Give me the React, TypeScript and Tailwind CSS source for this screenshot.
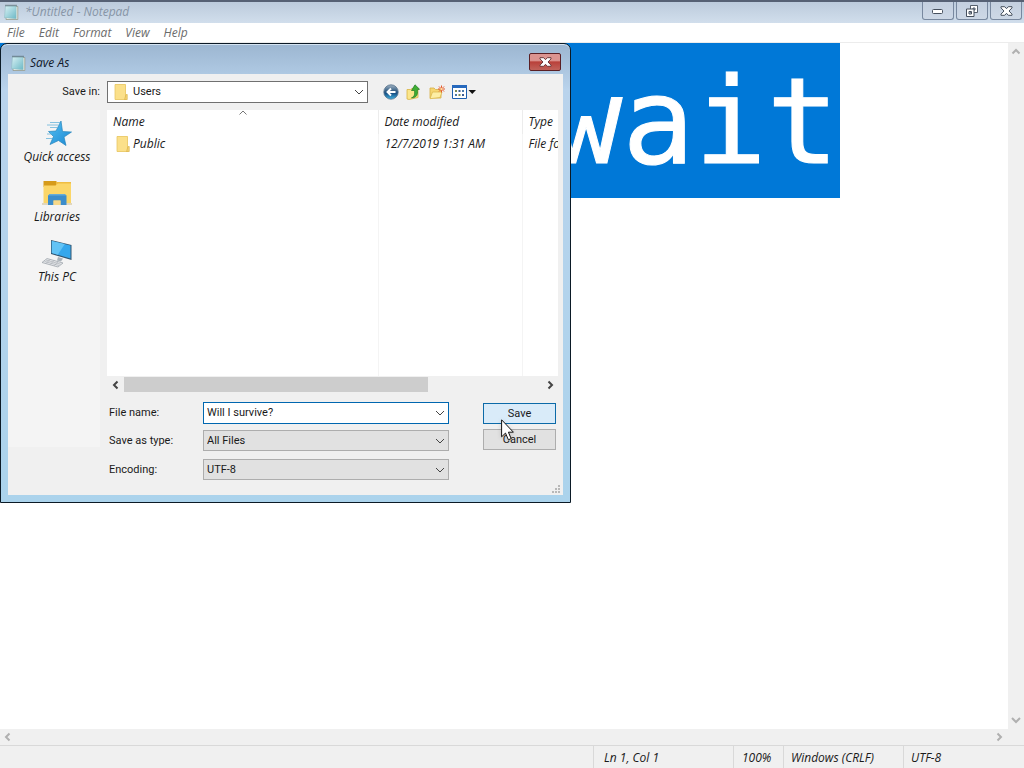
import React from "react";

type ChevronProps = { dir: "up" | "down" | "left" | "right"; className?: string };

const chevronPaths = {
  up: "M1.5 6.5 5 3l3.5 3.5",
  down: "M1 3l4 4 4-4",
  left: "M6.5 1.5 3 5l3.5 3.5",
  right: "M3.5 1.5 7 5 3.5 8.5",
};

function Chevron({ dir, className = "" }: ChevronProps) {
  return (
    <svg viewBox="0 0 10 10" className={`size-[10px] shrink-0 ${className}`} fill="none" stroke="currentColor" aria-hidden="true">
      <path d={chevronPaths[dir]} />
    </svg>
  );
}

function NotepadIcon({ className = "" }: { className?: string }) {
  return (
    <svg viewBox="0 0 16 16" className={`size-4 shrink-0 ${className}`} aria-hidden="true">
      <defs>
        <linearGradient id="pad" x1="0" y1="0" x2="1" y2="1">
          <stop offset="0" stopColor="#d9f1f4" />
          <stop offset="1" stopColor="#6cb9c6" />
        </linearGradient>
      </defs>
      <path d="M4 2.500h10.800V15.500H3z" fill="#f6f5ea" stroke="#8b8f80" strokeWidth=".7" />
      <path d="M2.500 2h10.700v12.700L1.500 13.700z" fill="url(#pad)" stroke="#86b7bf" strokeWidth=".5" />
      <path d="M2.500 1.400H14" stroke="#47585c" strokeWidth="1.500" strokeDasharray="1 1" />
    </svg>
  );
}

function FolderIcon() {
  return (
    <svg viewBox="0 0 14 16" className="h-4 w-[14px] shrink-0" aria-hidden="true">
      <path d="M1 .5h10.500v10l1.500 1v4H1z" fill="#f3cf5f" />
      <path d="M1 .5h10.500v15H1z" fill="#fbe08a" stroke="#e9c765" strokeWidth=".8" />
      <path d="M10.500 15.500 12 10.500h1.300v5z" fill="#f3d272" stroke="#d5aa3c" strokeWidth=".5" />
    </svg>
  );
}

function BackIcon() {
  return (
    <svg viewBox="0 0 16 16" className="size-4" aria-hidden="true">
      <defs>
        <linearGradient id="orb" x1="0" y1="0" x2="0" y2="1">
          <stop offset="0" stopColor="#a3b4c4" />
          <stop offset=".4" stopColor="#3c6488" />
          <stop offset=".6" stopColor="#1a5387" />
          <stop offset="1" stopColor="#3fb4e4" />
        </linearGradient>
      </defs>
      <circle cx="8" cy="8" r="7.200" fill="url(#orb)" stroke="#54718c" strokeWidth=".8" />
      <path d="M12.500 8H5M8 4.500 4.500 8 8 11.500" fill="none" stroke="#fff" strokeWidth="1.900" />
    </svg>
  );
}

function UpFolderIcon() {
  return (
    <svg viewBox="0 0 16 16" className="size-4" aria-hidden="true">
      <path d="M1 5.500h3.500L6 4.500l6-.5v9.500L3 15.500 1 15z" fill="#fbe68b" stroke="#d8b343" strokeWidth=".8" />
      <path d="M5.500 13.800c3-1 3.500-3.500 3-7.300H5.500L9 .8l4.500 4.400-2.200.6c.8 5-1 8.200-5.800 8z" fill="#3fae35" stroke="#1d7a21" strokeWidth=".7" />
    </svg>
  );
}

function NewFolderIcon() {
  return (
    <svg viewBox="0 0 16 16" className="size-4" aria-hidden="true">
      <path d="M1 4h4l1.500 1.500H12V14H1z" fill="#f6d672" stroke="#d6ae44" strokeWidth=".8" />
      <path d="M1 14.700 3.500 8h9.500l-2 5.500z" fill="#fdeea5" stroke="#dcb94f" strokeWidth=".8" />
      <path d="M12.500 1.500v7M9 5h7M10 2.500l5 5M15 2.500l-5 5" stroke="#e4572b" strokeWidth="1" />
      <circle cx="12.500" cy="5" r="1.200" fill="#ffd9a0" />
    </svg>
  );
}

function ViewIcon() {
  return (
    <svg viewBox="0 0 24 16" className="h-4 w-6" aria-hidden="true">
      <path d="M.5 1.500h14V14.500H.5z" fill="#fff" stroke="#1d5fae" />
      <path d="M0 1h15v3H0z" fill="#2769bd" />
      <path d="M3 6h2v2H3zM6.500 10h2v2h-2z" fill="#7a8c54" />
      <path d="M6.500 6h2v2h-2zM10 10h2v2h-2z" fill="#3b5c92" />
      <path d="M10 6h2v2h-2zM3 10h2v2H3z" fill="#4c7aa9" />
      <path d="M16.500 6H24l-3.750 4z" fill="#111" />
    </svg>
  );
}

function StarIcon() {
  return (
    <svg viewBox="0 0 32 32" className="size-8" aria-hidden="true">
      <defs>
        <linearGradient id="star" x1="0" y1="0" x2="1" y2="1">
          <stop offset="0" stopColor="#55c0f2" />
          <stop offset="1" stopColor="#1a87d2" />
        </linearGradient>
      </defs>
      <path d="m20 4 1.500 10.500 9 .5-7.500 5 2 8.500-7.500-5L9 27.500l3.500-8L7.500 14.500l7.500-.5z" fill="url(#star)" stroke="#2585bd" strokeWidth=".7" />
      <path d="M9 5.500h10M6 8h11.500M9 10.500h7M6 17h5M5 21.500h6" stroke="#69b5da" strokeWidth=".8" />
    </svg>
  );
}

function LibrariesIcon() {
  return (
    <svg viewBox="0 0 32 32" className="size-8" aria-hidden="true">
      <path d="M2.500 4h13v6h-13z" fill="#d69b1a" />
      <path d="M15 5h15v8H15z" fill="#efbd42" />
      <path d="M2.500 8.500h12L17 6.500h13V26H2.500z" fill="#fbd668" />
      <path d="M1 27h30" stroke="#cdb985" />
      <path d="M7 28V18.500L9 17h14.500l2 1.500V28h-6v-4.500h-7V28z" fill="#3c8dcb" />
      <path d="M12.500 23.500h7V28h-7z" fill="#f7d98a" />
      <path d="M9 17h14.500l2 1.500H7z" fill="#65acd9" />
    </svg>
  );
}

function PcIcon() {
  return (
    <svg viewBox="0 0 32 32" className="size-8" aria-hidden="true">
      <path d="m10 3 20.500 5v15L10 17z" fill="#33556f" />
      <path d="m10.800 4 18.700 4.500v13L10.800 16z" fill="#35a7ec" />
      <path d="m10.800 4 13 3-7 10.700-6-1.700z" fill="#62c3f5" />
      <path d="m17 20 5 1.500-2 3-4-1z" fill="#aab2b9" />
      <path d="m6 21.500 16 4.500-5 4-16-4.500z" fill="#e4e6e9" stroke="#969da5" strokeWidth=".7" />
      <path d="m5 23 14.500 4.200M3.500 24.400 18 28.500M9 22.500l-4 4M13 23.500l-4 4.200M17 24.800l-4 4" stroke="#a2a8af" strokeWidth=".6" />
    </svg>
  );
}

function Cursor() {
  return (
    <svg viewBox="0 0 13 22" className="h-[22px] w-[13px] drop-shadow-sm" aria-hidden="true">
      <path d="M.6.8v17l3.900-3.700 2.900 6.700 2.800-1.200-2.800-6.400h5z" fill="#fff" stroke="#111" strokeWidth="1" />
    </svg>
  );
}

const captionButton =
  "flex h-[18px] w-8 items-center justify-center rounded-b-[3px] border border-t-0 border-[#78889f] bg-gradient-to-b from-[#c3cfdf] to-[#cdd8e6] text-[#46505e]";

function CloseGlyph() {
  return (
    <svg viewBox="0 0 13 10" className="h-[10px] w-[13px]" aria-hidden="true">
      <path
        d="M1 .7h3.700L6.500 2.700 8.300.7H12v1.200L9 5l3 3.100v1.200H8.300L6.500 7.300 4.700 9.300H1V8.100L4 5 1 1.900z"
        fill="#fff"
        stroke="currentColor"
      />
    </svg>
  );
}

function TitleBar() {
  return (
    <header className="flex h-[23px] shrink-0 items-start justify-between border-t-2 border-[#566174] bg-gradient-to-b from-[#bccbdc] to-[#d1deec] pr-[2px]">
      <div className="flex h-5 items-center gap-[6px] pl-[3px] text-[#8795a6]">
        <NotepadIcon />
        <h1 className="italic">*Untitled - Notepad</h1>
      </div>
      <div className="flex gap-[2px]">
        <button className={captionButton} aria-label="Minimize">
          <svg viewBox="0 0 12 10" className="h-[10px] w-3" aria-hidden="true">
            <rect x=".5" y="3.500" width="10" height="4" rx="1" fill="#fff" stroke="currentColor" />
          </svg>
        </button>
        <button className={captionButton} aria-label="Restore">
          <svg viewBox="0 0 12 12" className="size-3" fillRule="evenodd" aria-hidden="true">
            <path d="M4.500.5h7v7h-7zM7 3v2h2V3z" fill="#fff" stroke="currentColor" strokeWidth=".9" />
            <path d="M.5 4h7.500v7.500H.5zM3 6.500V9h2.500V6.500z" fill="#fff" stroke="currentColor" />
          </svg>
        </button>
        <button className={captionButton} aria-label="Close">
          <CloseGlyph />
        </button>
      </div>
    </header>
  );
}

function Places() {
  const places = [
    { name: "Quick access", icon: <StarIcon /> },
    { name: "Libraries", icon: <LibrariesIcon /> },
    { name: "This PC", icon: <PcIcon /> },
  ];
  return (
    <nav aria-label="Places" className="mb-12 flex w-[92px] shrink-0 flex-col gap-3 bg-[#f4f4f4] pt-[7px]">
      {places.map((p) => (
        <button key={p.name} className="flex h-12 flex-col items-center pl-[6px] italic leading-4">
          {p.icon}
          {p.name}
        </button>
      ))}
    </nav>
  );
}

function FileList() {
  return (
    <div className="flex h-[283px] w-[451px] flex-col">
      <div className="relative flex-1 overflow-hidden bg-white">
        <table className="h-full w-[560px] table-fixed border-collapse text-left italic">
          <colgroup>
            <col className="w-[271px]" />
            <col className="w-[144px]" />
            <col />
          </colgroup>
          <thead>
            <tr className="h-6">
              <th className="border-r border-[#ececec] pl-[6px] font-normal">Name</th>
              <th className="border-r border-[#ececec] pl-[6px] font-normal">Date modified</th>
              <th className="pl-[6px] font-normal">Type</th>
            </tr>
          </thead>
          <tbody>
            <tr className="h-5">
              <td className="border-r border-[#f4f4f4] pl-[9px]">
                <span className="flex items-center gap-[3px]">
                  <FolderIcon />
                  Public
                </span>
              </td>
              <td className="border-r border-[#f4f4f4] pl-[6px]">12/7/2019 1:31 AM</td>
              <td className="pl-[6px]">File folder</td>
            </tr>
            <tr>
              <td className="border-r border-[#f4f4f4]" />
              <td className="border-r border-[#f4f4f4]" />
              <td />
            </tr>
          </tbody>
        </table>
        <Chevron dir="up" className="absolute left-[131px] top-[-2px] text-[#777]" />
      </div>
      <div className="flex h-[17px] items-center justify-between text-[#444]">
        <button aria-label="Scroll left" className="flex w-[17px] justify-center">
          <Chevron dir="left" className="stroke-2" />
        </button>
        <div className="flex-1">
          <div className="h-[15px] w-[304px] bg-[#cdcdcd]" />
        </div>
        <button aria-label="Scroll right" className="flex w-[17px] justify-center">
          <Chevron dir="right" className="stroke-2" />
        </button>
      </div>
    </div>
  );
}

function SelectRow({ id, label, value }: { id: string; label: string; value: string }) {
  return (
    <div className="flex items-center">
      <label htmlFor={id} className="w-24 pl-[2px]">
        {label}
      </label>
      <div className="grid w-[246px] items-center">
        <select id={id} className="col-start-1 row-start-1 h-[21px] appearance-none border border-[#adadad] bg-[#e1e1e1] px-[3px]">
          <option>{value}</option>
        </select>
        <Chevron dir="down" className="pointer-events-none col-start-1 row-start-1 mr-1 justify-self-end text-[#444]" />
      </div>
    </div>
  );
}

const toolButton = "flex h-5 items-center justify-center";

function SaveAsDialog() {
  return (
    <section
      role="dialog"
      aria-label="Save As"
      className="absolute left-0 top-[43px] flex w-[571px] flex-col rounded-t-[7px] border border-[#0b1a26] bg-gradient-to-b from-[#9cb6d1] via-[#b9d3ec] via-10% to-[#abd3ec] px-[7px] pb-[7px] shadow-[inset_0_1px_0_#d5e4f2]"
    >
      <header className="flex h-[30px] items-center justify-between">
        <div className="flex items-center gap-1 pl-[2px] pt-2">
          <NotepadIcon />
          <h2 className="italic text-[#10182a]">Save As</h2>
        </div>
        <button
          aria-label="Close"
          className="mr-[2px] mt-[6px] flex h-[18px] w-8 items-center justify-center rounded-[2px] border border-[#5a1f24] bg-gradient-to-b from-[#dc9490] from-40% via-[#b9403a] via-50% to-[#c0625a] text-[#6d3a3c]"
        >
          <CloseGlyph />
        </button>
      </header>
      <div className="flex h-[421px] flex-col bg-[#f0f0f0] font-['Roboto',sans-serif] text-[11px]">
        <div className="flex h-9 items-center">
          <label htmlFor="save-in" className="w-[92px] text-right">
            Save in:
          </label>
          <div className="ml-[7px] grid w-[261px] items-center">
            <select id="save-in" className="col-start-1 row-start-1 h-[22px] appearance-none border border-[#707070] bg-white pl-[25px]">
              <option>Users</option>
            </select>
            <span className="pointer-events-none col-start-1 row-start-1 pl-[7px]">
              <FolderIcon />
            </span>
            <Chevron dir="down" className="pointer-events-none col-start-1 row-start-1 mr-1 justify-self-end text-[#444]" />
          </div>
          <div className="flex items-center gap-[7px] pl-[15px]">
            <button className={toolButton} aria-label="Back"><BackIcon /></button>
            <button className={toolButton} aria-label="Up one level"><UpFolderIcon /></button>
            <button className={toolButton} aria-label="Create new folder"><NewFolderIcon /></button>
            <button className={toolButton} aria-label="View menu"><ViewIcon /></button>
          </div>
        </div>
        <div className="flex flex-1">
          <div className="flex font-['Open_Sans',sans-serif] text-[12px]">
            <Places />
          </div>
          <div className="ml-[7px] flex flex-col">
            <div className="font-['Open_Sans',sans-serif] text-[12px]">
              <FileList />
            </div>
            <div className="flex justify-between pr-[2px] pt-[9px]">
              <div className="flex flex-col">
                <div className="mb-[6px] flex items-center">
                  <label htmlFor="file-name" className="w-24 pl-[2px]">
                    File name:
                  </label>
                  <div className="flex h-[22px] w-[246px] items-center border border-[#0067b0] bg-white pr-[3px]">
                    <input id="file-name" defaultValue="Will I survive?" className="min-w-0 flex-1 px-[3px] outline-none" />
                    <button aria-label="Previous file names"><Chevron dir="down" className="text-[#444]" /></button>
                  </div>
                </div>
                <div className="flex flex-col gap-2">
                  <SelectRow id="save-type" label="Save as type:" value="All Files" />
                  <SelectRow id="encoding" label="Encoding:" value="UTF-8" />
                </div>
              </div>
              <div className="flex flex-col gap-[5px] pt-px">
                <button className="h-[21px] w-[73px] border border-[#0c6aa8] bg-[#d9ebf9]">Save</button>
                <button className="h-[21px] w-[73px] border border-[#adadad] bg-[#e1e1e1]">Cancel</button>
              </div>
            </div>
          </div>
        </div>
      </div>
      <svg viewBox="0 0 9 9" className="absolute bottom-[8px] right-[9px] size-[9px]" fill="#b8b8b8" aria-hidden="true">
        <path d="M6 0h2v2H6zM3 3h2v2H3zM6 3h2v2H6zM0 6h2v2H0zM3 6h2v2H3zM6 6h2v2H6z" />
      </svg>
    </section>
  );
}

export default function App() {
  return (
    <div className="relative flex h-screen w-full flex-col overflow-hidden bg-white font-['Open_Sans',sans-serif] text-[12px] leading-4 text-[#1a1a1a]">
      <TitleBar />
      <nav className="flex h-[19px] shrink-0 items-center gap-[14px] pl-[7px] italic text-[#6b6b6b]">
        {["File", "Edit", "Format", "View", "Help"].map((m) => (
          <button key={m}>{m}</button>
        ))}
      </nav>
      <main className="flex min-h-0 flex-1 border-t border-[#ececec]">
        <div className="min-w-0 flex-1">
          <textarea
            aria-label="Document text"
            rows={1}
            defaultValue="wait"
            className="block h-[155px] w-[840px] resize-none overflow-hidden bg-[#0078d7] pr-px pt-[3px] text-right font-['DejaVu_Sans_Mono',monospace] text-[120px] leading-[152px] text-white outline-none [-webkit-text-stroke:1px_white]"
          />
        </div>
        <div className="flex w-4 shrink-0 flex-col items-center justify-between bg-[#f0f0f0] py-1 text-[#b0b0b0]">
          <button aria-label="Scroll up"><Chevron dir="up" className="stroke-2" /></button>
          <button aria-label="Scroll down"><Chevron dir="down" className="stroke-2" /></button>
        </div>
      </main>
      <div className="flex h-4 shrink-0 items-center justify-between bg-[#f0f0f0] pl-[3px] pr-5 text-[#b0b0b0]">
        <button aria-label="Scroll left"><Chevron dir="left" className="stroke-2" /></button>
        <button aria-label="Scroll right"><Chevron dir="right" className="stroke-2" /></button>
      </div>
      <footer className="flex h-[23px] shrink-0 items-stretch justify-end border-t border-[#d9d9d9] bg-[#f0f0f0] italic leading-6">
        <span className="w-[140px] border-l border-[#d9d9d9] pl-[10px]">Ln 1, Col 1</span>
        <span className="w-[50px] border-l border-[#d9d9d9] pl-2">100%</span>
        <span className="w-[120px] border-l border-[#d9d9d9] pl-[7px]">Windows (CRLF)</span>
        <span className="w-[121px] border-l border-[#d9d9d9] pl-[7px]">UTF-8</span>
      </footer>
      <SaveAsDialog />
      <div className="pointer-events-none absolute left-[501px] top-[419px]">
        <Cursor />
      </div>
    </div>
  );
}
